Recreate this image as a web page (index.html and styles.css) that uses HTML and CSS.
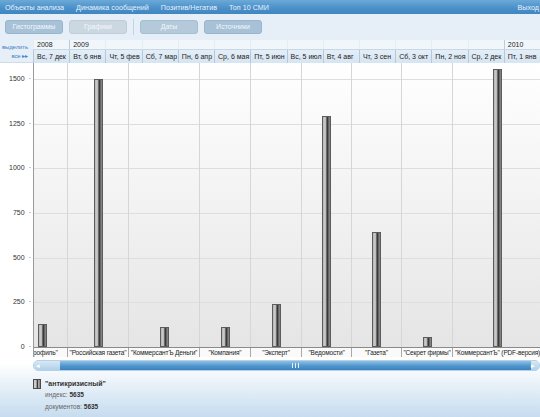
FILE: index.html
```html
<!DOCTYPE html>
<html lang="ru">
<head>
    <meta charset="UTF-8">
    <title>Гистограммы</title>
    <link rel="stylesheet" href="styles.css">
</head>
<body>
    <div class="topnav">
        <div class="menu">
            <a href="#">Объекты анализа</a>
            <a href="#">Динамика сообщений</a>
            <a href="#">Позитив/Негатив</a>
            <a href="#">Топ 10 СМИ</a>
        </div>
        <a href="#" class="logout">Выход</a>
    </div>

    <div class="toolbar">
        <span class="btn">Гистограммы</span>
        <span class="btn dim">Графики</span>
        <span class="sep"></span>
        <span class="btn mid">Даты</span>
        <span class="btn">Источники</span>
    </div>

    <div class="timeline">
        <div class="select-all">выделить<br>все <span class="arr">&#9656;&#9656;</span></div>
        <div class="dates">
            <div class="years">
                <span>2008</span><span class="yr">2009</span><span></span><span></span><span></span><span></span><span></span><span></span><span></span><span></span><span></span><span></span><span></span><span class="yr">2010</span>
            </div>
            <div class="days">
                <span>Вс, 7 дек</span>
                <span>Вт, 6 янв</span>
                <span>Чт, 5 фев</span>
                <span>Сб, 7 мар</span>
                <span>Пн, 6 апр</span>
                <span>Ср, 6 мая</span>
                <span>Пт, 5 июн</span>
                <span>Вс, 5 июл</span>
                <span>Вт, 4 авг</span>
                <span>Чт, 3 сен</span>
                <span>Сб, 3 окт</span>
                <span>Пн, 2 ноя</span>
                <span>Ср, 2 дек</span>
                <span>Пт, 1 янв</span>
            </div>
        </div>
    </div>

    <div class="chart">
        <div class="yaxis">
            <span>1500</span>
            <span>1250</span>
            <span>1000</span>
            <span>750</span>
            <span>500</span>
            <span>250</span>
            <span>0</span>
        </div>
        <div class="plot-wrap">
            <div class="plot">
                <div class="grid">
                    <div></div><div></div><div></div><div></div><div></div><div></div>
                </div>
                <div class="cats">
                    <div class="cat w51"><div class="bar" style="height: 23px"></div></div>
                    <div class="cat w61"><div class="bar" style="height: 268px"></div></div>
                    <div class="cat w71"><div class="bar" style="height: 20px"></div></div>
                    <div class="cat w51"><div class="bar" style="height: 20px"></div></div>
                    <div class="cat w51"><div class="bar" style="height: 43px"></div></div>
                    <div class="cat w50"><div class="bar" style="height: 231px"></div></div>
                    <div class="cat w50"><div class="bar" style="height: 115px"></div></div>
                    <div class="cat w51"><div class="bar" style="height: 10px"></div></div>
                    <div class="cat w90"><div class="bar" style="height: 278px"></div></div>
                </div>
            </div>
            <div class="xlabels">
                <span class="w51">"Профиль"</span>
                <span class="w61">"Российская газета"</span>
                <span class="w71">"КоммерсантЪ Деньги"</span>
                <span class="w51">"Компания"</span>
                <span class="w51">"Эксперт"</span>
                <span class="w50">"Ведомости"</span>
                <span class="w50">"Газета"</span>
                <span class="w51">"Секрет фирмы"</span>
                <span class="w90">"КоммерсантЪ" (PDF-версия)</span>
            </div>
        </div>
    </div>

    <div class="footer">
        <div class="scroll">
            <div class="scroll-left">&#9666;</div>
            <div class="thumb"><span class="grip"></span></div>
            <div class="scroll-right">&#9656;</div>
        </div>
        <div class="legend">
            <div class="legend-title"><span class="swatch"></span>"антикризисный"</div>
            <div class="legend-row">индекс: <b>5635</b></div>
            <div class="legend-row">документов: <b>5635</b></div>
        </div>
    </div>
</body>
</html>
```

FILE: styles.css
```css
body {
  margin: 0;
  padding: 0;
  width: 540px;
  height: 417px;
  overflow: hidden;
  font-family: 'Liberation Sans', Arial, sans-serif;
  font-size: 7px;
  color: #333;
  background: #fff;
}

/* top menu */
.topnav {
  display: flex;
  justify-content: space-between;
  align-items: center;
  height: 14px;
  padding: 0 1px 0 5px;
  font-size: 7.2px;
  background: linear-gradient(#6ba9d8, #4a8fc8 60%, #3f86c2);
}
.topnav a {
  color: #e8f2fb;
  text-decoration: none;
}
.topnav .menu {
  display: flex;
  gap: 12px;
}

/* buttons */
.toolbar {
  display: flex;
  align-items: center;
  gap: 6px;
  height: 26px;
  padding: 0 5px;
  background: #e6eff7;
}
.btn {
  width: 56px;
  height: 12px;
  line-height: 12px;
  text-align: center;
  color: #f4f8fb;
  background: #a7c1d7;
  border: 1px solid #9ab6cd;
  border-radius: 3px;
}
.btn.dim {
  background: #cbd7e1;
  border-color: #bfcdd9;
}
.btn.mid {
  background: #b4c9da;
  border-color: #a6bed2;
}
.sep {
  width: 1px;
  height: 16px;
  background: #c3d3e0;
}

/* dates header */
.timeline {
  display: flex;
  height: 22px;
  border-bottom: 1px solid #cfdce8;
}
.select-all {
  width: 33px;
  padding: 3px 5px 0 0;
  box-sizing: border-box;
  text-align: right;
  font-size: 6px;
  line-height: 9px;
  letter-spacing: -0.1px;
  color: #3b7ec4;
  background: #e6eff7;
}
.select-all .arr {
  font-size: 6px;
}
.dates {
  flex: 1;
  display: flex;
  flex-direction: column;
}
.years, .days {
  display: grid;
  grid-template-columns: repeat(14, 1fr);
}
.years {
  height: 9px;
  line-height: 9px;
  background: #f1f6fa;
}
.years span {
  padding-left: 3px;
  border-left: 1px solid #e6eef5;
  color: #222;
}
.years span.yr {
  border-left-color: #b8cde0;
}
.days {
  height: 13px;
  line-height: 13px;
  background: linear-gradient(#e4eef7, #d6e5f2);
  border-top: 1px solid #c6d8e8;
}
.days span {
  padding-left: 3px;
  border-left: 1px solid #b3c9dd;
  color: #222;
  white-space: nowrap;
  overflow: hidden;
}

/* chart */
.chart {
  display: flex;
  height: 294px;
}
.yaxis {
  width: 34px;
  box-sizing: border-box;
  padding-top: 11px;
  border-right: 1px solid #9a9a9a;
  display: flex;
  flex-direction: column;
}
.yaxis span {
  height: 44.67px;
  line-height: 10px;
  padding-right: 2px;
  text-align: right;
  color: #333;
  flex-shrink: 0;
}
.yaxis span::after {
  content: "·";
  margin-left: 4px;
}
.plot-wrap {
  flex: 1;
  overflow: hidden;
}
.plot {
  display: grid;
  height: 284px;
  background: linear-gradient(#fff, #e5e5e5);
}
.grid, .cats {
  grid-area: 1 / 1;
}
.grid {
  display: flex;
  flex-direction: column;
  justify-content: flex-end;
}
.grid div {
  height: 44.67px;
  box-sizing: border-box;
  border-top: 1px solid #dedede;
}
.cats {
  display: flex;
  margin-left: -17px;
}
.cat {
  flex-shrink: 0;
  display: flex;
  justify-content: center;
  align-items: flex-end;
  box-sizing: border-box;
  border-right: 1px solid #d6d6d6;
}
.bar {
  width: 9px;
  box-sizing: border-box;
  border: 1px solid #5c5c5c;
  background: linear-gradient(to right, #b5b5b5 0, #cfcfcf 30%, #9d9d9d 45%, #3a3a3a 55%, #3a3a3a 72%, #8f8f8f 85%, #777 100%);
}
.w50 { width: 50px; }
.w51 { width: 51px; }
.w61 { width: 61px; }
.w71 { width: 71px; }
.w90 { width: 90px; }

.xlabels {
  display: flex;
  margin-left: -17px;
  height: 10px;
  line-height: 10px;
  border-top: 1px solid #8a8a8a;
  background: #fafafa;
}
.xlabels span {
  flex-shrink: 0;
  box-sizing: border-box;
  text-align: center;
  white-space: nowrap;
  overflow: hidden;
  font-size: 6.5px;
  letter-spacing: -0.15px;
  border-right: 1px solid #a8a8a8;
  color: #222;
}

/* scroll and legend */
.footer {
  height: 60px;
  padding-top: 3px;
  box-sizing: border-box;
  background: linear-gradient(#fff 10%, #c6dcef);
}
.scroll {
  display: flex;
  margin-left: 33px;
  height: 9px;
  border: 1px solid #b6d1e6;
  border-radius: 5px;
  background: #eaf3fa;
  overflow: hidden;
}
.scroll-left {
  width: 24px;
  font-size: 7px;
  line-height: 9px;
  padding-left: 2px;
  color: #fff;
  background: linear-gradient(#d6e8f6, #b0d0e9);
}
.thumb {
  flex: 1;
  display: flex;
  justify-content: center;
  align-items: center;
  background: linear-gradient(#8fc0e6, #4f95cc 55%, #3d83bf);
}
.grip {
  width: 5px;
  height: 5px;
  border-left: 1px solid #e3f0fa;
  border-right: 1px solid #e3f0fa;
}
.grip::after {
  content: "";
  display: block;
  margin-left: 2px;
  width: 1px;
  height: 5px;
  background: #e3f0fa;
}
.scroll-right {
  width: 8px;
  font-size: 7px;
  line-height: 9px;
  color: #fff;
  background: linear-gradient(#d6e8f6, #b0d0e9);
}
.legend {
  padding: 7px 0 0 33px;
}
.legend-title {
  display: flex;
  align-items: center;
  gap: 4px;
  height: 11px;
  font-weight: bold;
  color: #333;
}
.swatch {
  width: 8px;
  height: 10px;
  box-sizing: border-box;
  border: 1px solid #4a4a4a;
  background: linear-gradient(to right, #c9c9c9 0, #c9c9c9 40%, #3a3a3a 45%, #3a3a3a 60%, #aaa 70%, #888 100%);
}
.legend-row {
  padding-left: 12px;
  margin-top: 2px;
  height: 10px;
  color: #666;
  font-size: 6.5px;
}
.legend-row b {
  color: #333;
}
```
